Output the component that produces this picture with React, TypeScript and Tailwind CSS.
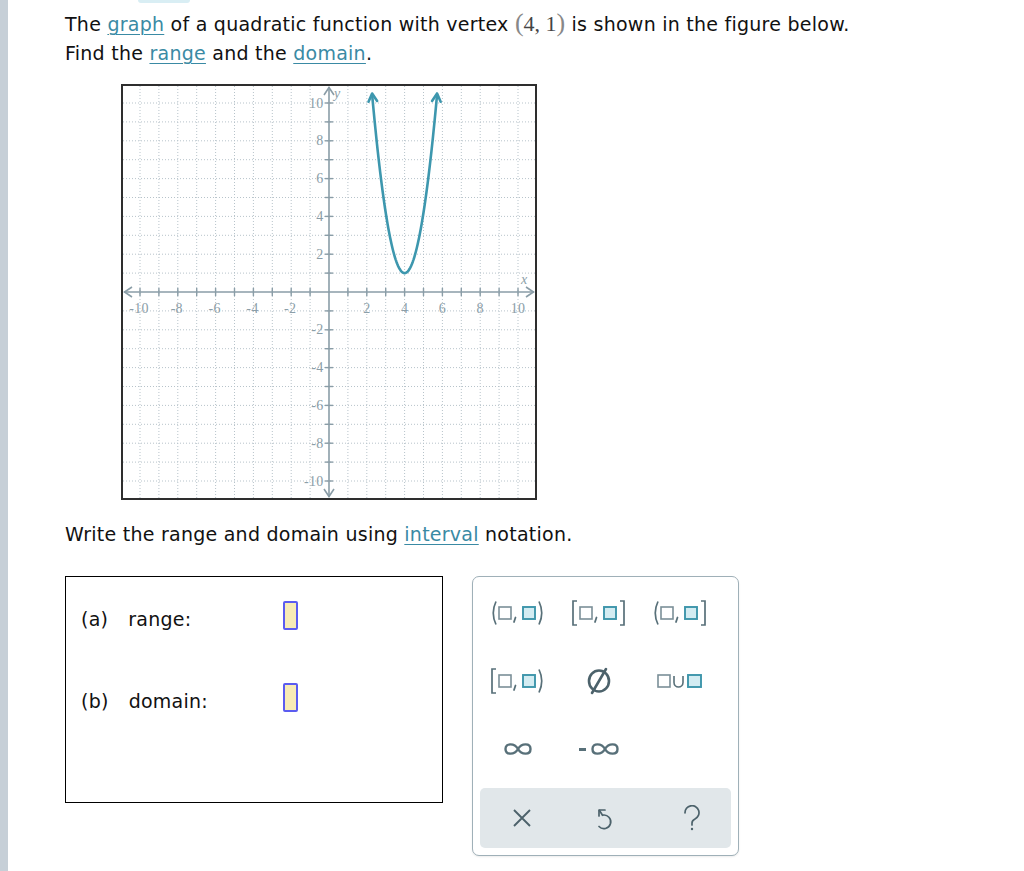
import React from "react";

const U = 18.9;
const C = 206;
const px = (x: number) => C + x * U;
const py = (y: number) => C - y * U;

const gridColor = "#b7c3ca";
const axisColor = "#8a9da7";
const labelColor = "#8b9ea8";
const curveColor = "#3d97ae";

function chevron(tipX: number, tipY: number, dx: number, dy: number, len = 9, spread = 0.5) {
  // dx,dy = unit direction pointing toward tip
  const cos = Math.cos(spread);
  const sin = Math.sin(spread);
  const bx = -dx;
  const by = -dy;
  const a1x = tipX + len * (bx * cos - by * sin);
  const a1y = tipY + len * (bx * sin + by * cos);
  const a2x = tipX + len * (bx * cos + by * sin);
  const a2y = tipY + len * (-bx * sin + by * cos);
  return `M${a1x} ${a1y} L${tipX} ${tipY} L${a2x} ${a2y}`;
}

function Graph() {
  const ticks: number[] = [];
  for (let i = -10; i <= 10; i++) ticks.push(i);

  const a = 3.2;
  const half = Math.sqrt((10.45 - 1) / a);
  const pts: string[] = [];
  const N = 80;
  for (let k = 0; k <= N; k++) {
    const x = 4 - half + (2 * half * k) / N;
    const y = a * (x - 4) * (x - 4) + 1;
    pts.push(`${px(x).toFixed(2)},${py(y).toFixed(2)}`);
  }
  // tangent at ends
  const slope = 2 * a * half * U;
  const len = Math.sqrt(U * U + slope * slope);
  const lx = -U / len;
  const ly = -slope / len;

  return (
    <div className="w-[416px] h-[416px] border-2 border-[#2e2e2e] bg-white">
      <svg width="412" height="412" viewBox="0 0 412 412">
        {ticks.map((i) =>
          i === 0 ? null : (
            <g key={"g" + i}>
              <line x1={px(i)} y1={0} x2={px(i)} y2={412} stroke={gridColor} strokeWidth={1} strokeDasharray="1 2" />
              <line x1={0} y1={py(i)} x2={412} y2={py(i)} stroke={gridColor} strokeWidth={1} strokeDasharray="1 2" />
            </g>
          )
        )}
        {/* axes */}
        <line x1={1} y1={C} x2={411} y2={C} stroke={axisColor} strokeWidth={1.6} />
        <line x1={C} y1={1} x2={C} y2={411} stroke={axisColor} strokeWidth={1.6} />
        <path d={`M9 ${C - 5} L1.5 ${C} L9 ${C + 5}`} fill="none" stroke={axisColor} strokeWidth={1.6} />
        <path d={`M403 ${C - 5} L410.5 ${C} L403 ${C + 5}`} fill="none" stroke={axisColor} strokeWidth={1.6} />
        <path d={`M${C - 5} 9 L${C} 1.5 L${C + 5} 9`} fill="none" stroke={axisColor} strokeWidth={1.6} />
        <path d={`M${C - 5} 403 L${C} 410.5 L${C + 5} 403`} fill="none" stroke={axisColor} strokeWidth={1.6} />
        {ticks.map((i) =>
          i === 0 ? null : (
            <g key={"t" + i}>
              <line x1={px(i)} y1={C - 4} x2={px(i)} y2={C + 4} stroke={axisColor} strokeWidth={1.4} />
              <line x1={C - 4} y1={py(i)} x2={C + 4} y2={py(i)} stroke={axisColor} strokeWidth={1.4} />
            </g>
          )
        )}
        {ticks
          .filter((i) => i !== 0 && i % 2 === 0)
          .map((i) => (
            <g key={"l" + i} fontFamily="'Liberation Serif', serif" fontSize="14" fill={labelColor}>
              <text x={px(i) + (i < 0 ? -1 : 0)} y={C + 20.5} textAnchor="middle">
                {i < 0 ? "-" + Math.abs(i) : i}
              </text>
              <text x={C - 5.5} y={py(i) + 4.5} textAnchor="end">
                {i < 0 ? "-" + Math.abs(i) : i}
              </text>
            </g>
          ))}
        <text x={398} y={198} fontFamily="'Liberation Serif', serif" fontStyle="italic" fontSize="14" fill={labelColor}>
          x
        </text>
        <text x={211} y={12} fontFamily="'Liberation Serif', serif" fontStyle="italic" fontSize="14" fill={labelColor}>
          y
        </text>
        {/* parabola */}
        <polyline points={pts.join(" ")} fill="none" stroke={curveColor} strokeWidth={2.6} strokeLinejoin="round" />
        <path
          d={chevron(px(4 - half), py(10.45) - 1, lx, ly)}
          fill="none"
          stroke={curveColor}
          strokeWidth={2.6}
          strokeLinecap="round"
          strokeLinejoin="round"
        />
        <path
          d={chevron(px(4 + half), py(10.45) - 1, -lx, ly)}
          fill="none"
          stroke={curveColor}
          strokeWidth={2.6}
          strokeLinecap="round"
          strokeLinejoin="round"
        />
      </svg>
    </div>
  );
}

const P = "#587079";
const GB = "#7b8f98";
const TB = "#3d95ab";
const TF = "#d3ecf2";

function Interval({ left, right }: { left: "(" | "["; right: ")" | "]" }) {
  const l = left === "(" ? "M6 1.5 Q0.5 13 6 24.5" : "M6 1 H2 V25 H6";
  const r = right === ")" ? "M49 1.5 Q54.5 13 49 24.5" : "M49 1 H53 V25 H49";
  return (
    <svg width="56" height="26" viewBox="0 0 56 26" fill="none">
      <path d={l} stroke={P} strokeWidth={1.7} />
      <rect x={9} y={7} width={12} height={12} stroke={GB} strokeWidth={1.6} fill="#fff" />
      <path d="M25.5 17.5 L24 22" stroke={P} strokeWidth={1.8} strokeLinecap="round" />
      <rect x={33} y={7} width={12} height={12} stroke={TB} strokeWidth={1.9} fill={TF} />
      <path d={r} stroke={P} strokeWidth={1.7} />
    </svg>
  );
}

function InfinityMark() {
  return (
    <path
      d="M14 8 C10.5 1.8 1.5 1.8 1.5 8 C1.5 14.2 10.5 14.2 14 8 C17.5 1.8 26.5 1.8 26.5 8 C26.5 14.2 17.5 14.2 14 8 Z"
      stroke={P}
      strokeWidth={2.4}
      fill="none"
    />
  );
}

function Keypad() {
  return (
    <div className="w-[267px] h-[280px] rounded-[7px] border border-[#9fb0b8] bg-white pl-[4px] pt-[2px] flex flex-col shadow-[0_1px_2px_rgba(0,0,0,0.08)]">
      <div className="grid grid-cols-[81px_81px_81px] auto-rows-[68px]">
        <div className="flex items-center justify-center">
          <Interval left="(" right=")" />
        </div>
        <div className="flex items-center justify-center">
          <Interval left="[" right="]" />
        </div>
        <div className="flex items-center justify-center">
          <Interval left="(" right="]" />
        </div>
        <div className="flex items-center justify-center">
          <Interval left="[" right=")" />
        </div>
        <div className="flex items-center justify-center">
          <svg width="30" height="28" viewBox="0 0 30 28" fill="none">
            <ellipse cx="15" cy="14" rx="10" ry="10.5" stroke="#4c626b" strokeWidth={2.6} />
            <path d="M8 26 L22 2" stroke="#4c626b" strokeWidth={2.6} strokeLinecap="round" />
          </svg>
        </div>
        <div className="flex items-center justify-center">
          <svg width="48" height="16" viewBox="0 0 48 16" fill="none">
            <rect x={2} y={2} width={12} height={12} stroke={GB} strokeWidth={1.6} fill="#fff" />
            <path d="M18 3 V9.5 A4.5 4.5 0 0 0 27 9.5 V3" stroke={P} strokeWidth={1.6} />
            <rect x={32} y={2} width={13} height={12} stroke={TB} strokeWidth={1.9} fill={TF} />
          </svg>
        </div>
        <div className="flex items-center justify-center">
          <svg width="28" height="16" viewBox="0 0 28 16" fill="none">
            <InfinityMark />
          </svg>
        </div>
        <div className="flex items-center justify-center">
          <svg width="42" height="16" viewBox="0 0 42 16" fill="none">
            <path d="M1 8.5 H8" stroke={P} strokeWidth={3} />
            <g transform="translate(13 0)">
              <InfinityMark />
            </g>
          </svg>
        </div>
      </div>
      <div className="mt-[5px] mr-[7px] ml-[3px] h-[60px] rounded-[5px] bg-[#e1e7ea] grid grid-cols-3">
        <div className="flex items-center justify-center">
          <svg width="20" height="20" viewBox="0 0 20 20" fill="none">
            <path d="M2 2 L18 18 M18 2 L2 18" stroke="#4c626b" strokeWidth={1.9} />
          </svg>
        </div>
        <div className="flex items-center justify-center">
          <svg width="18" height="26" viewBox="0 0 18 26" fill="none" className="mt-[3px]">
            <path d="M3 3 H9 M3 3 V9" stroke="#4c626b" strokeWidth={1.7} strokeLinecap="round" />
            <path d="M3.5 3.5 L6.5 8.2 A6.8 6.8 0 1 1 3 19.5" stroke="#4c626b" strokeWidth={1.7} strokeLinecap="round" />
          </svg>
        </div>
        <div className="flex items-center justify-center">
          <svg width="20" height="26" viewBox="0 0 20 26" fill="none" className="ml-[6px]">
            <path d="M3 8 A7 7 0 1 1 13 14 C11 15 10 16 10 18 V20" stroke="#4c626b" strokeWidth={1.7} strokeLinecap="round" />
            <circle cx="10" cy="24" r="1.2" fill="#4c626b" />
          </svg>
        </div>
      </div>
    </div>
  );
}

function Link({ children }: { children: React.ReactNode }) {
  return <span className="text-[#3a8aa4] underline underline-offset-[3px] decoration-1">{children}</span>;
}

export default function App() {
  return (
    <div className="min-h-[871px] w-[1024px] bg-white flex font-[family-name:DejaVu_Sans,Verdana,sans-serif] text-[#111] text-[19px] tracking-[0.25px]">
      <div className="w-[8px] shrink-0 self-stretch bg-[#c6cfd7]" />
      <div className="pl-[57px] flex flex-col">
        <div className="ml-[73px] h-[3px] w-[52px] rounded-b-full bg-[#d9eef4]" />
        <p className="mt-[7px] leading-[28px]">
          The <Link>graph</Link> of a quadratic function with vertex{" "}
          <span className="font-[family-name:Liberation_Serif,serif] text-[#444] tracking-normal">
            <span className="text-[26px] text-[#888] leading-none">(</span>
            <span className="text-[22px]">4, 1</span>
            <span className="text-[26px] text-[#888] leading-none">)</span>
          </span>{" "}
          is shown in the figure below.
          <br />
          Find the <Link>range</Link> and the <Link>domain</Link>.
        </p>
        <div className="ml-[56px] mt-[17px]">
          <Graph />
        </div>
        <p className="mt-[20px] leading-[28px]">
          Write the range and domain using <Link>interval</Link> notation.
        </p>
        <div className="mt-[28px] flex items-start gap-[29px]">
          <div className="w-[378px] h-[227px] border border-black pl-[15px] pt-[24px] flex flex-col gap-[53px]">
            <div className="flex items-end h-[29px]">
              <span className="w-[202px] leading-normal -mb-[3px]">
                (a)<span className="ml-[20px]">range:</span>
              </span>
              <div className="w-[15px] h-[29px] border-2 border-[#5b5cf0] bg-[#f7ebb6] rounded-[2px]" />
            </div>
            <div className="flex items-end h-[29px]">
              <span className="w-[202px] leading-normal -mb-[3px]">
                (b)<span className="ml-[20px]">domain:</span>
              </span>
              <div className="w-[15px] h-[29px] border-2 border-[#5b5cf0] bg-[#f7ebb6] rounded-[2px]" />
            </div>
          </div>
          <Keypad />
        </div>
      </div>
    </div>
  );
}
